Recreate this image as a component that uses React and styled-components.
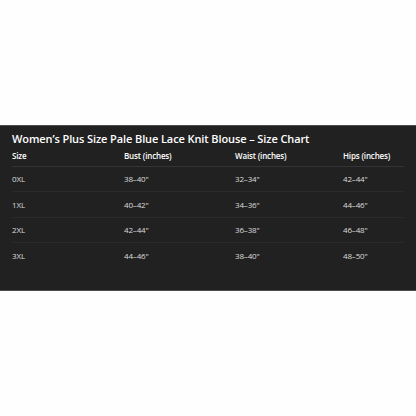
import React from "react";
import styled, { createGlobalStyle } from "styled-components";

const GlobalStyle = createGlobalStyle`
  html, body {
    margin: 0;
    padding: 0;
    background: #fefefe;
  }
  body {
    font-family: "Open Sans", "Noto Sans", "DejaVu Sans", sans-serif;
  }
`;

const Page = styled.div`
  width: 416px;
  height: 416px;
  padding-top: 125px;
  box-sizing: border-box;
`;

const Panel = styled.section`
  height: 166px;
  box-sizing: border-box;
  background: #212121;
  border-top: 1px solid #4c4c4c;
  border-bottom: 1px solid #4c4c4c;
  padding: 5px 12px 0 12px;
`;

const Title = styled.h2`
  margin: 0;
  color: #ffffff;
  font-size: 11px;
  font-weight: 600;
  line-height: 15px;
  letter-spacing: -0.1px;
`;

const Row = styled.div`
  display: grid;
  grid-template-columns: 112px 111px 108px 1fr;
  align-items: center;
  height: ${(p) => (p.$head ? "20.5px" : "25.5px")};
  border-bottom: ${(p) =>
    p.$last ? "none" : p.$head ? "1px solid #333333" : "1px solid #2a2a2a"};
  box-sizing: border-box;
`;

const Cell = styled.span`
  color: ${(p) => (p.$head ? "#ffffff" : "#dcdcdc")};
  font-size: 8px;
  font-weight: ${(p) => (p.$head ? 600 : 400)};
  letter-spacing: -0.15px;
  white-space: nowrap;
`;

const sizes = [
  ["0XL", "38–40\"", "32–34\"", "42–44\""],
  ["1XL", "40–42\"", "34–36\"", "44–46\""],
  ["2XL", "42–44\"", "36–38\"", "46–48\""],
  ["3XL", "44–46\"", "38–40\"", "48–50\""],
];

const head = ["Size", "Bust (inches)", "Waist (inches)", "Hips (inches)"];

export default function App() {
  return (
    <>
      <GlobalStyle />
      <Page>
        <Panel>
          <Title>Women’s Plus Size Pale Blue Lace Knit Blouse – Size Chart</Title>
          <Row $head>
            {head.map((h) => (
              <Cell key={h} $head>
                {h}
              </Cell>
            ))}
          </Row>
          {sizes.map((r, i) => (
            <Row key={r[0]} $last={i === sizes.length - 1}>
              {r.map((c, j) => (
                <Cell key={j}>{c}</Cell>
              ))}
            </Row>
          ))}
        </Panel>
      </Page>
    </>
  );
}
